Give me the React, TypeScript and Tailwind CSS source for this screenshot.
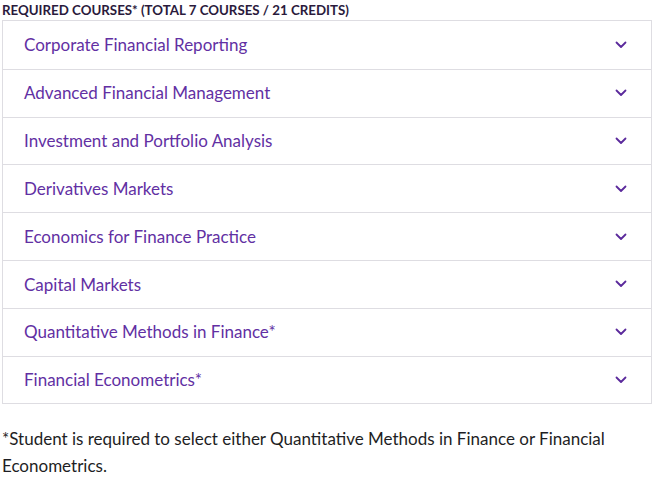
const courses = [
  'Corporate Financial Reporting',
  'Advanced Financial Management',
  'Investment and Portfolio Analysis',
  'Derivatives Markets',
  'Economics for Finance Practice',
  'Capital Markets',
  'Quantitative Methods in Finance*',
  'Financial Econometrics*',
]

function Chevron() {
  return (
    <svg width="12" height="8" viewBox="0 0 12 8" fill="none" className="shrink-0">
      <path d="M1.5 1.5 L6 6 L10.5 1.5" stroke="#5b2a9c" strokeWidth="1.8" strokeLinecap="round" strokeLinejoin="round" />
    </svg>
  )
}

export default function App() {
  return (
    <div className="w-[656px] h-[480px] bg-white pt-[1px] font-['Lato','Liberation_Sans',sans-serif]">
      <h3 className="pl-[2px] text-[13.3px] leading-[19px] font-bold uppercase text-[#2a1a3c]">
        Required Courses* (Total 7 Courses / 21 Credits)
      </h3>
      <div className="ml-[2px] w-[650px] border border-[#dedde2]">
        {courses.map((c, i) => (
          <div
            key={c}
            className={`flex items-center justify-between h-[47.8px] pl-[21px] pr-[24px] ${i > 0 ? 'border-t border-[#dedde2]' : ''}`}
          >
            <span className="text-[17px] text-[#6230a3]">{c}</span>
            <Chevron />
          </div>
        ))}
      </div>
      <p className="mt-[21px] pl-[2px] pr-[40px] text-[17px] leading-[27px] text-[#1e1e24]">
        *Student is required to select either Quantitative Methods in Finance or Financial Econometrics.
      </p>
    </div>
  )
}
